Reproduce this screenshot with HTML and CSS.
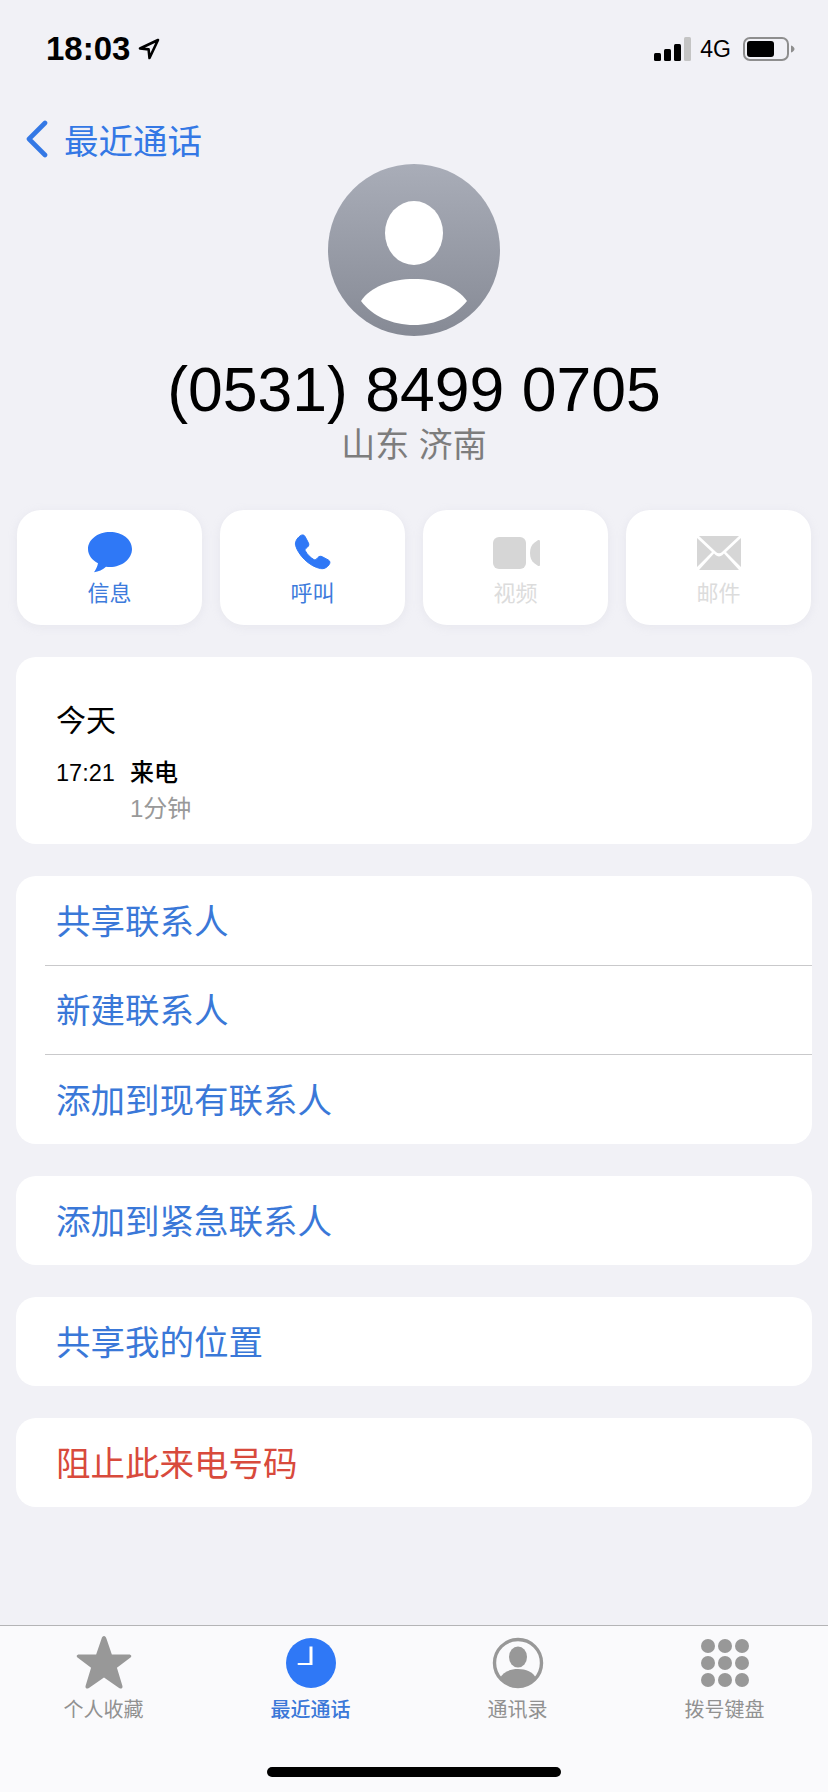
FILE: index.html
```html
<!DOCTYPE html>
<html lang="zh-CN">
<head>
	<meta charset="UTF-8">
	<title>最近通话</title>
	<link rel="stylesheet" href="styles.css">
</head>
<body>
	<div class="screen">
		<div class="status">
			<div class="clock">
				<span>18:03</span>
				<svg class="arrow" width="22" height="22" viewBox="0 0 22 22"><path d="M20 2 2 10.500l8.600.9.9 8.600z" fill="none" stroke="#000" stroke-width="2.600" stroke-linejoin="round"/></svg>
			</div>
			<div class="status-right">
				<svg width="37" height="24" viewBox="0 0 37 24">
					<rect x="0" y="16" width="7" height="8" rx="1.500" fill="#000"/>
					<rect x="10" y="12" width="7" height="12" rx="1.500" fill="#000"/>
					<rect x="20" y="7" width="7" height="17" rx="1.500" fill="#000"/>
					<rect x="30" y="0" width="7" height="24" rx="1.500" fill="#c4c4c4"/>
				</svg>
				<span class="net">4G</span>
				<svg width="52" height="24" viewBox="0 0 52 24">
					<rect x="1" y="1" width="44" height="22" rx="6" fill="none" stroke="#8e8e8e" stroke-width="2"/>
					<rect x="4" y="4" width="27" height="16" rx="3" fill="#000"/>
					<path d="M48 8.500c2 .6 3.500 2 3.500 3.500s-1.500 2.900-3.500 3.500z" fill="#8e8e8e"/>
				</svg>
			</div>
		</div>

		<div class="back">
			<svg width="24" height="38" viewBox="0 0 24 38"><path d="M20 3 4 19l16 16" fill="none" stroke="#3478e5" stroke-width="4.600" stroke-linecap="round" stroke-linejoin="round"/></svg>
			<span>最近通话</span>
		</div>

		<div class="head">
			<svg class="avatar" width="172" height="172" viewBox="0 0 172 172">
				<defs>
					<linearGradient id="avatargrad" x1="0" y1="0" x2="0" y2="1">
						<stop offset="0" stop-color="#a9adb8"/>
						<stop offset="1" stop-color="#868a95"/>
					</linearGradient>
				</defs>
				<circle cx="86" cy="86" r="86" fill="url(#avatargrad)"/>
				<ellipse cx="86" cy="69" rx="29" ry="32" fill="#fff"/>
				<path d="M33 137c9-14 30-22 53-22s43 8 53 22c-12 15-31 24-53 24s-42-9-53-24z" fill="#fff"/>
			</svg>
			<div class="number">(0531) 8499 0705</div>
			<div class="place">山东 济南</div>
		</div>

		<div class="actions">
			<div class="action">
				<svg width="44" height="42" viewBox="0 0 44 42"><path d="M22 0C10 0 0 7.500 0 17c0 6 4 11.300 10 14.200-.6 3.300-2.200 6.600-4 9 4.300-.4 9-2.400 12-5.400 1.300.1 2.600.2 4 .2 12 0 22-8 22-18S34 0 22 0z" fill="#2f78f6"/></svg>
				<span>信息</span>
			</div>
			<div class="action">
				<svg width="44" height="42" viewBox="0 0 44 42"><path d="M9 4c2-1.600 4-1.400 5 .4l3.400 6.400c.8 1.600.5 3-.8 4.200l-2 1.800c-.6.600-.7 1.200-.3 2 2 3.700 5 6.700 8.700 8.900.8.400 1.400.3 2-.3l2-2c1.200-1.200 2.600-1.500 4.200-.7l6 3.200c2 1 2.300 3 .7 5-2 2.700-5 4.400-8.300 3.700C18 34.500 7 22.500 4.600 13.500 3.700 10 6 6.300 9 4z" fill="#2f78f6" stroke="#2f78f6" stroke-width="1"/></svg>
				<span>呼叫</span>
			</div>
			<div class="action off">
				<svg width="50" height="42" viewBox="-2 0 50 42"><rect x="0" y="5" width="33" height="32" rx="6" fill="#d6d6d6"/><path d="M47 9.500v23c0 1.500-1 2-2.200 1.200l-3.800-2.700c-2.500-1.800-4-5.300-4-10s1.500-8.200 4-10l3.800-2.700C46 7.500 47 8 47 9.500z" fill="#d6d6d6"/></svg>
				<span>视频</span>
			</div>
			<div class="action off">
				<svg width="44" height="42" viewBox="0 0 44 42">
					<path d="M2 4h40L25 20c-1.700 1.600-4.300 1.600-6 0z" fill="#d6d6d6"/>
					<path d="M0 6v29l15-15zM44 6v29L29 20zM2 38l15-16.500 1.500 1.500c2 1.900 5 1.900 7 0l1.500-1.500L42 38z" fill="#d6d6d6"/>
				</svg>
				<span>邮件</span>
			</div>
		</div>

		<div class="card history">
			<div class="day">今天</div>
			<div class="call">
				<div class="time">17:21</div>
				<div>
					<div class="kind">来电</div>
					<div class="length">1分钟</div>
				</div>
			</div>
		</div>

		<div class="card">
			<div class="row">共享联系人</div>
			<div class="row">新建联系人</div>
			<div class="row tall">添加到现有联系人</div>
		</div>
		<div class="card">
			<div class="row">添加到紧急联系人</div>
		</div>
		<div class="card">
			<div class="row">共享我的位置</div>
		</div>
		<div class="card">
			<div class="row red">阻止此来电号码</div>
		</div>

		<div class="tabbar">
			<div class="tabs">
				<div class="tab">
					<svg width="56" height="54" viewBox="2 1 52 50"><path d="M28 1c1 0 1.800.8 2.300 2.500l5 14.500h15.500c2.500 0 3.500 1.500 1.500 3.200L40 30.500l5 16.500c.8 2.600-1 3.500-3 2.200L28 39.500 14 49.200c-2 1.300-3.800.4-3-2.200l5-16.500L3.700 21.200C1.700 19.500 2.700 18 5.200 18h15.500l5-14.500C26.200 1.800 27 1 28 1z" fill="#989898"/></svg>
					<span>个人收藏</span>
				</div>
				<div class="tab active">
					<svg width="56" height="54" viewBox="0 0 56 54"><circle cx="28" cy="27" r="25" fill="#2f78f6"/><path d="M26.500 27V10.500h3V29h-14a1 1 0 0 1 0-2z" fill="#fff"/></svg>
					<span>最近通话</span>
				</div>
				<div class="tab">
					<svg width="56" height="54" viewBox="0 0 56 54">
						<circle cx="28" cy="27" r="23.500" fill="none" stroke="#989898" stroke-width="3.400"/>
						<ellipse cx="28" cy="21" rx="9" ry="10.500" fill="#989898"/>
						<path d="M10 42c3-6 10-9 18-9s15 3 18 9c-4.500 5-11 8-18 8s-13.500-3-18-8z" fill="#989898"/>
					</svg>
					<span>通讯录</span>
				</div>
				<div class="tab">
					<svg width="56" height="54" viewBox="0 0 56 54" fill="#989898">
						<circle cx="11" cy="10" r="7"/><circle cx="28" cy="10" r="7"/><circle cx="45" cy="10" r="7"/>
						<circle cx="11" cy="27" r="7"/><circle cx="28" cy="27" r="7"/><circle cx="45" cy="27" r="7"/>
						<circle cx="11" cy="44" r="7"/><circle cx="28" cy="44" r="7"/><circle cx="45" cy="44" r="7"/>
					</svg>
					<span>拨号键盘</span>
				</div>
			</div>
			<div class="homebar"></div>
		</div>
	</div>
</body>
</html>
```
FILE: styles.css
```css
* {
	box-sizing: border-box;
}
html, body {
	margin: 0;
	padding: 0;
}
body {
	font-family: "Liberation Sans", "Noto Sans CJK SC", sans-serif;
	background: #f1f1f6;
	color: #000;
}
.screen {
	display: flex;
	flex-direction: column;
	width: 828px;
	height: 1792px;
	overflow: hidden;
}
.status {
	display: flex;
	justify-content: space-between;
	align-items: center;
	height: 98px;
	padding: 0 33px 0 46px;
}
.clock {
	display: flex;
	align-items: center;
	gap: 8px;
	font-size: 33px;
	font-weight: 700;
}
.status-right {
	display: flex;
	align-items: center;
	gap: 9px;
}
.net {
	margin-right: 3px;
	font-size: 23px;
}
.back {
	display: flex;
	align-items: center;
	gap: 15px;
	height: 44px;
	margin-top: 19px;
	margin-bottom: 3px;
	padding-left: 25px;
	font-size: 34.500px;
	color: #3478e5;
}
.head {
	display: flex;
	flex-direction: column;
	align-items: center;
}
.number {
	margin-top: 19px;
	font-size: 62.500px;
	line-height: 68px;
}
.place {
	font-size: 34px;
	line-height: 44px;
	color: #7d7d7d;
}
.actions {
	display: grid;
	grid-template-columns: repeat(4, 185px);
	gap: 18px;
	margin-top: 43px;
	padding-left: 17px;
}
.action {
	display: flex;
	flex-direction: column;
	align-items: center;
	height: 115px;
	padding-top: 22px;
	border-radius: 24px;
	background: #fff;
	box-shadow: 0 2px 10px rgba(190, 190, 205, 0.18);
	font-size: 22px;
	line-height: 30px;
	color: #3d7bdc;
}
.action svg {
	margin-bottom: 5px;
}
.action.off {
	color: #dcdcdc;
}
.card {
	width: 796px;
	margin: 32px 0 0 16px;
	border-radius: 20px;
	background: #fff;
}
.history {
	height: 187px;
	padding: 44px 40px 0;
}
.day {
	font-size: 30px;
	line-height: 40px;
}
.call {
	display: flex;
	gap: 16px;
	margin-top: 14px;
	font-size: 24px;
	line-height: 36px;
}
.time {
	width: 58px;
	font-size: 23.500px;
	white-space: nowrap;
}
.kind {
	font-weight: 500;
}
.length {
	color: #999;
}
.row {
	display: flex;
	align-items: center;
	height: 89px;
	margin-left: 29px;
	padding: 0 0 4px 11px;
	border-top: 1px solid #c9c9cb;
	font-size: 34.500px;
	color: #3a78d8;
}
.row:first-child {
	border-top: 0;
}
.row.tall {
	height: 90px;
}
.row.red {
	color: #d84a3c;
}
.tabbar {
	margin-top: auto;
	height: 167px;
	border-top: 1px solid #b4b4b6;
	background: #fafafc;
}
.tabs {
	display: grid;
	grid-template-columns: repeat(4, 207px);
	height: 141px;
	padding-top: 10px;
}
.tab {
	display: flex;
	flex-direction: column;
	align-items: center;
	font-size: 20px;
	line-height: 28px;
	color: #919191;
}
.tab svg {
	margin-bottom: 6px;
}
.tab.active {
	font-weight: 500;
	color: #3a78d8;
}
.homebar {
	width: 294px;
	height: 10px;
	margin: 0 auto;
	border-radius: 5px;
	background: #000;
}
```
